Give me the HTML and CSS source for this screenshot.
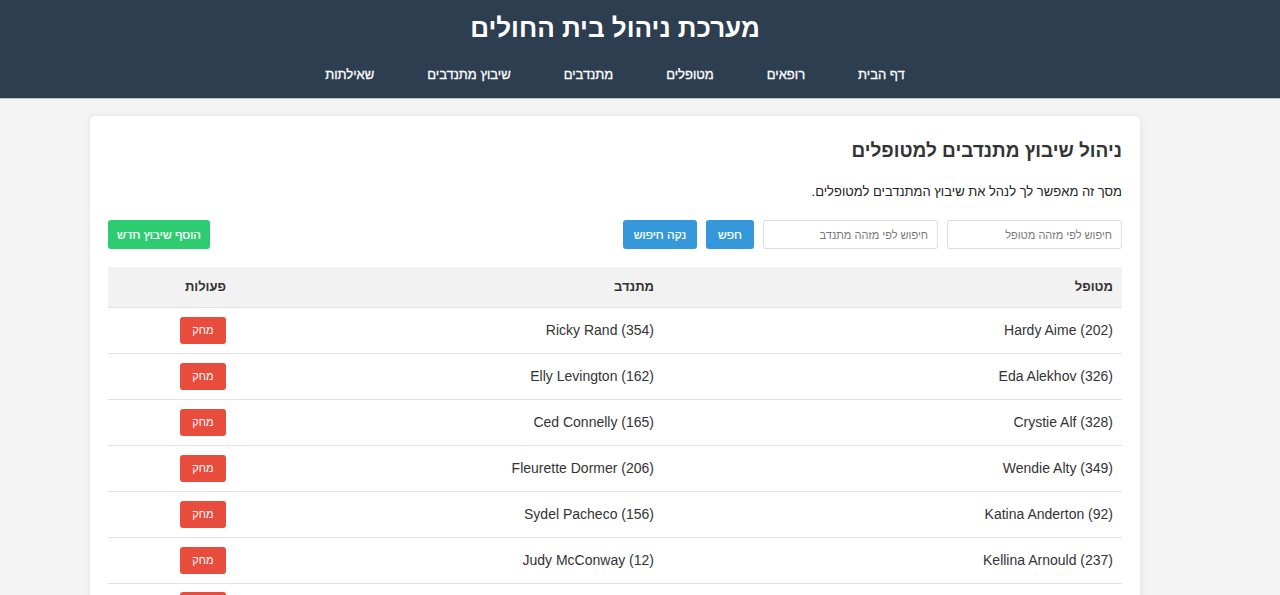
FILE: index.html
```html
<!DOCTYPE html>
<html lang="he" dir="rtl">
<head>
<meta charset="utf-8">
<title>מערכת ניהול בית החולים</title>
<link rel="stylesheet" href="styles.css">
</head>
<body>
<header class="site-header">
  <div class="wrap">
    <h1 class="site-title">מערכת ניהול בית החולים</h1>
    <nav class="nav">
      <a href="#">דף הבית</a>
      <a href="#">רופאים</a>
      <a href="#">מטופלים</a>
      <a href="#">מתנדבים</a>
      <a href="#">שיבוץ מתנדבים</a>
      <a href="#">שאילתות</a>
    </nav>
  </div>
</header>
<main class="wrap">
  <section class="card">
    <h2 class="card-title">ניהול שיבוץ מתנדבים למטופלים</h2>
    <p class="card-desc">מסך זה מאפשר לך לנהל את שיבוץ המתנדבים למטופלים.</p>
    <div class="toolbar">
      <div class="search">
        <input class="field" type="text" placeholder="חיפוש לפי מזהה מטופל">
        <input class="field" type="text" placeholder="חיפוש לפי מזהה מתנדב">
        <button class="btn btn-blue btn-search">חפש</button>
        <button class="btn btn-blue btn-clear">נקה חיפוש</button>
      </div>
      <button class="btn btn-green btn-add">הוסף שיבוץ חדש</button>
    </div>
    <table class="grid">
      <thead>
        <tr><th class="col-p">מטופל</th><th class="col-v">מתנדב</th><th class="col-a">פעולות</th></tr>
      </thead>
      <tbody>
        <tr><td>Hardy Aime (202)</td><td>Ricky Rand (354)</td><td><button class="btn btn-red">מחק</button></td></tr>
        <tr><td>Eda Alekhov (326)</td><td>Elly Levington (162)</td><td><button class="btn btn-red">מחק</button></td></tr>
        <tr><td>Crystie Alf (328)</td><td>Ced Connelly (165)</td><td><button class="btn btn-red">מחק</button></td></tr>
        <tr><td>Wendie Alty (349)</td><td>Fleurette Dormer (206)</td><td><button class="btn btn-red">מחק</button></td></tr>
        <tr><td>Katina Anderton (92)</td><td>Sydel Pacheco (156)</td><td><button class="btn btn-red">מחק</button></td></tr>
        <tr><td>Kellina Arnould (237)</td><td>Judy McConway (12)</td><td><button class="btn btn-red">מחק</button></td></tr>
        <tr class="row-partial"><td></td><td></td><td><button class="btn btn-red" aria-label="מחק"></button></td></tr>
      </tbody>
    </table>
  </section>
</main>
</body>
</html>
```

FILE: styles.css
```css
* { box-sizing: border-box; }

html, body {
  margin: 0;
  padding: 0;
}

body {
  background: #f4f4f4;
  font-family: "Liberation Sans", Arial, sans-serif;
  color: #333;
  direction: rtl;
}

.wrap {
  width: 1230px;
  margin-right: auto;
  margin-left: 0;
}

.site-header {
  background: #2c3e50;
  color: #fff;
  height: 99px;
  border-bottom: 1px solid #b9c2cc;
}

.site-header .wrap {
  display: flex;
  flex-direction: column;
  align-items: center;
  padding-top: 13px;
}

.site-title {
  margin: 0;
  font-size: 26px;
  line-height: 30px;
  font-weight: bold;
}

.nav {
  display: flex;
  gap: 53px;
  margin-top: 24px;
}

.nav a {
  color: #fff;
  text-decoration: none;
  font-size: 13px;
  font-weight: normal;
  line-height: 15px;
  -webkit-text-stroke: 0.3px #fff;
}

main.wrap {
  display: flex;
  justify-content: center;
  padding-top: 17px;
}

.card {
  width: 1050px;
  background: #fff;
  border-radius: 5px;
  box-shadow: 0 0 8px rgba(0, 0, 0, 0.08);
  padding: 20px 18px 0;
  height: 500px;
  overflow: hidden;
}

.card-title {
  margin: 4px 0 0;
  font-size: 19px;
  line-height: 22px;
  font-weight: bold;
  color: #333;
}

.card-desc {
  margin: 22px 0 0;
  font-size: 13px;
  line-height: 16px;
  color: #222;
}

.toolbar {
  margin-top: 20px;
  display: flex;
  justify-content: space-between;
  align-items: center;
}

.search {
  display: flex;
  gap: 9px;
  align-items: center;
}

.field {
  width: 175px;
  height: 29px;
  border: 1px solid #ddd;
  border-radius: 3px;
  padding: 0 9px;
  font-family: inherit;
  font-size: 11px;
  color: #333;
  direction: rtl;
  background: #fff;
}

.field::placeholder {
  color: #777;
}

.btn {
  border: none;
  border-radius: 3px;
  color: #fff;
  font-family: inherit;
  font-size: 12px;
  font-weight: normal;
  -webkit-text-stroke: 0.2px #fff;
  height: 29px;
  padding: 0;
  cursor: pointer;
}

.btn-blue { background: #3498db; }
.btn-search { width: 48px; }
.btn-clear { width: 74px; }

.btn-green {
  background: #2ecc71;
  width: 102px;
}

.grid {
  width: 100%;
  margin-top: 18px;
  border-collapse: collapse;
  font-size: 14px;
}

.grid th {
  background: #f2f2f2;
  height: 40px;
  text-align: right;
  padding: 0 9px;
  font-size: 13px;
  font-weight: bold;
  color: #333;
  border-bottom: 1px solid #e3e3e3;
}

.col-p { width: 459px; }
.col-v { width: 428px; }
.col-a { width: 127px; }

.grid td {
  height: 46px;
  padding: 0 9px;
  text-align: right;
  border-bottom: 1px solid #e3e3e3;
  color: #333;
}

.row-partial td {
  vertical-align: top;
  padding-top: 8px;
}

.btn-red {
  background: #e74c3c;
  width: 46px;
  height: 27px;
  font-size: 11px;
  -webkit-text-stroke: 0;
  vertical-align: middle;
}
```
